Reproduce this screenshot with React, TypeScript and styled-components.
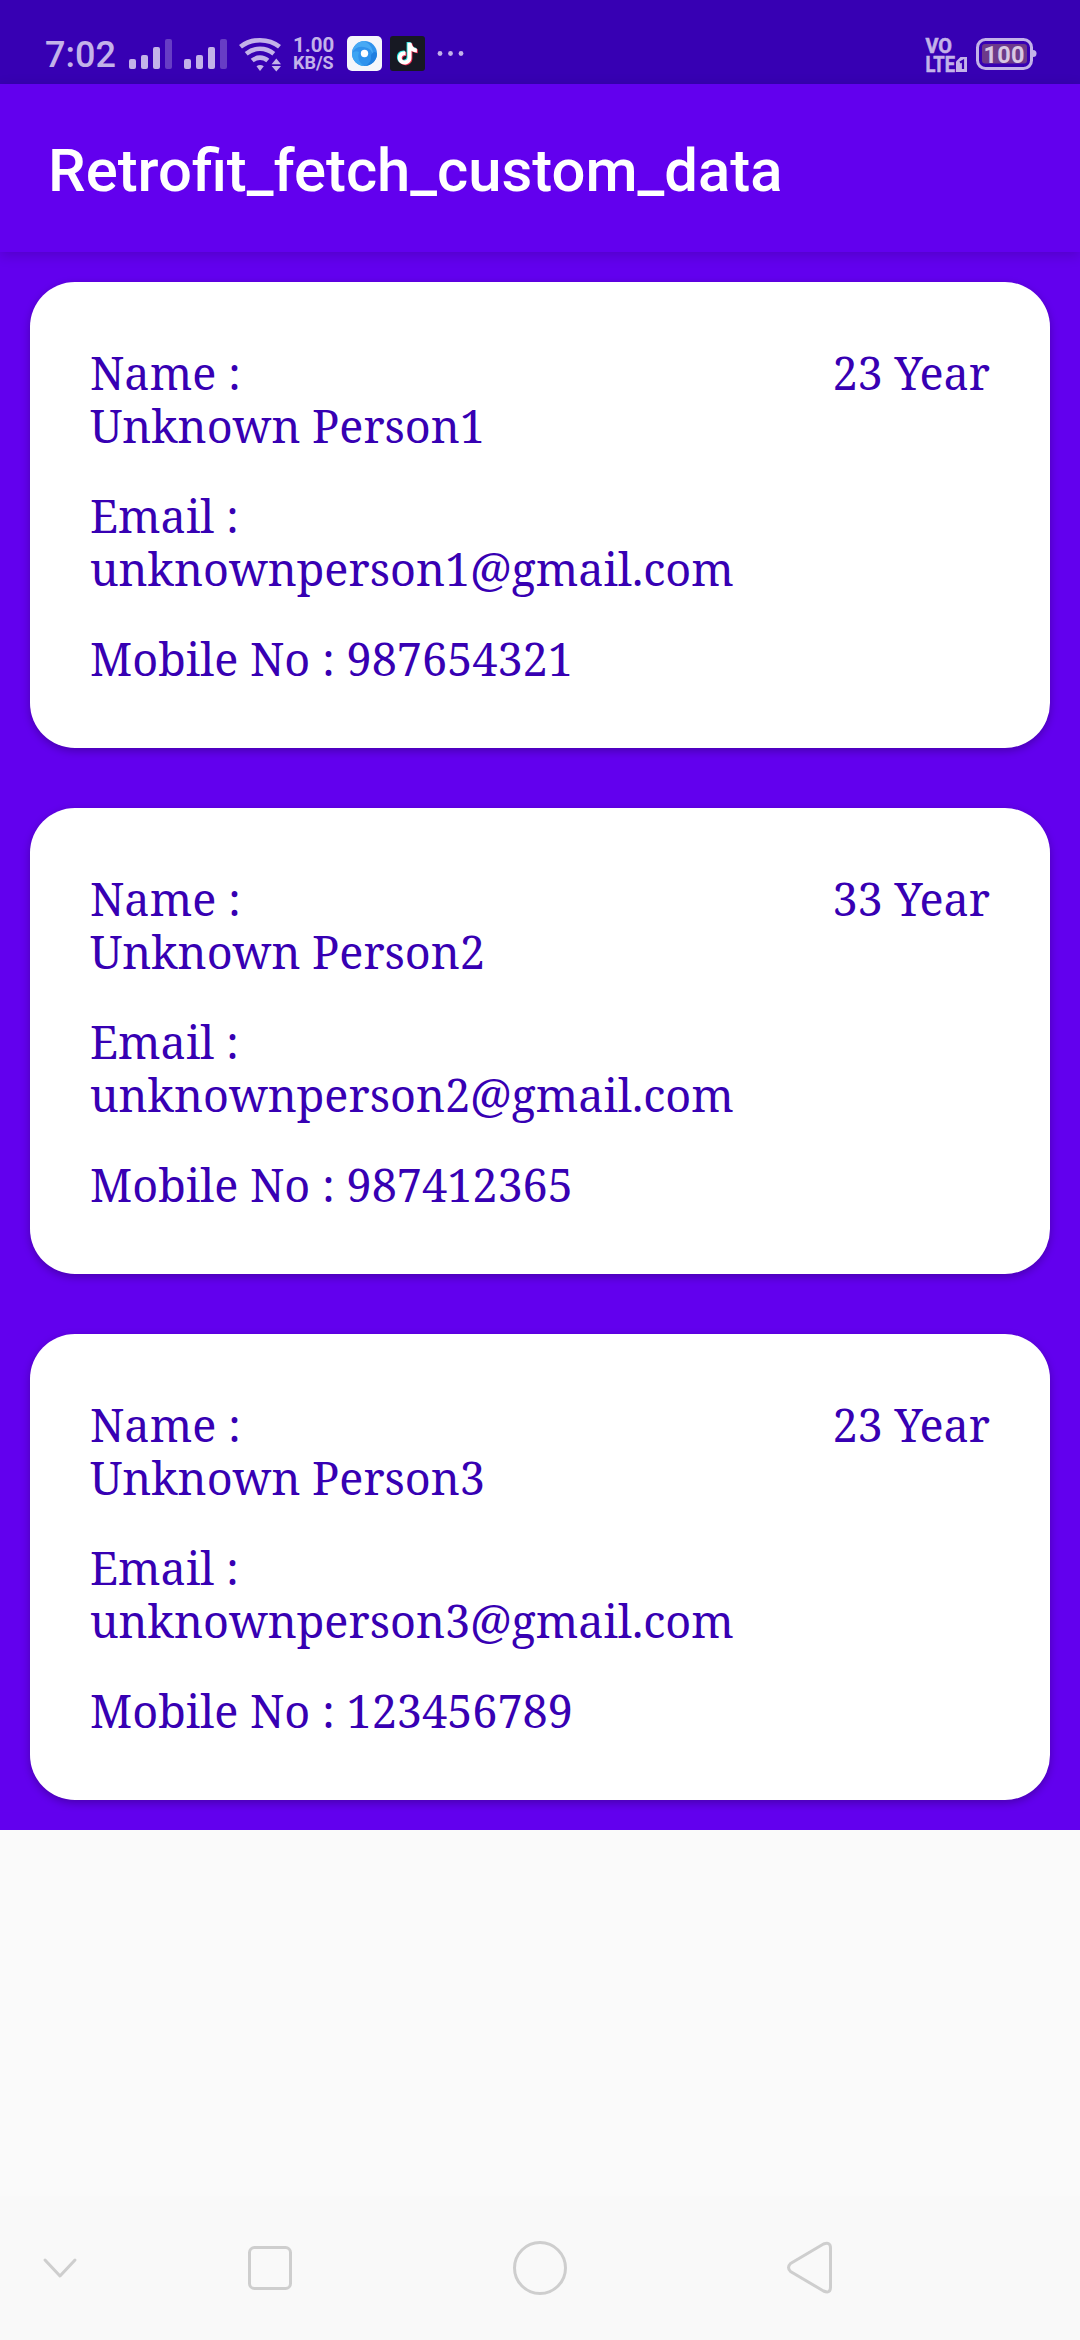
import React from 'react';
import styled, { createGlobalStyle } from 'styled-components';

const GlobalStyle = createGlobalStyle`
  body { margin: 0; background: #fafafa; }
  * { box-sizing: border-box; }
`;

const tint = '#c3b2e9';

const Screen = styled.div`
  width: 1080px;
  height: 2340px;
  display: flex;
  flex-direction: column;
  background: #fafafa;
  overflow: hidden;
  font-family: Roboto, sans-serif;
`;

const StatusBar = styled.header`
  height: 84px;
  flex: none;
  display: flex;
  align-items: flex-start;
  justify-content: space-between;
  padding: 36px 44px 0 45px;
  background: #3700b3;
  color: ${tint};
`;

const StatusGroup = styled.div`
  display: flex;
  align-items: flex-start;
`;

const Clock = styled.span`
  width: 84px;
  font-size: 36px;
  font-weight: 500;
  line-height: 39px;
`;

const Signal = styled.div`
  width: 55px;
  height: 33px;
  display: flex;
  align-items: flex-end;
  gap: 5px;
`;

const SignalBar = styled.span<{ $height: number; $dim?: boolean }>`
  width: 7px;
  height: ${(p) => p.$height}px;
  border-radius: 2px;
  background: ${tint};
  opacity: ${(p) => (p.$dim ? 0.34 : 1)};
`;

const Icon = styled.svg`
  display: block;
  flex: none;
  overflow: visible;
`;

const Speed = styled.div`
  width: 54px;
  padding-left: 12px;
  display: flex;
  flex-direction: column;
  font-weight: 700;
`;

const SpeedLine = styled.span<{ $size: number; $line: number }>`
  font-size: ${(p) => p.$size}px;
  line-height: ${(p) => p.$line}px;
`;

const AppIcons = styled.div`
  display: flex;
  gap: 8px;
  margin-left: 12px;
`;

const BatterySlot = styled.div`
  margin-left: 7px;
`;

const AppBar = styled.div`
  position: relative;
  z-index: 1;
  height: 168px;
  flex: none;
  display: flex;
  align-items: center;
  padding: 5px 48px 0;
  background: #6200ee;
  box-shadow: 0 3px 12px rgba(0, 0, 0, 0.17);
`;

const Title = styled.h1`
  margin: 0;
  color: #fff;
  font-size: 59.8px;
  font-weight: 500;
  line-height: 70px;
`;

const List = styled.main`
  display: flex;
  flex-direction: column;
  gap: 60px;
  padding: 30px;
  background: #6200ee;
`;

const Card = styled.article`
  height: 466px;
  display: flex;
  justify-content: space-between;
  padding: 64px 60px 0;
  border-radius: 45px;
  background: #fff;
  box-shadow: 0 3px 8px rgba(0, 0, 0, 0.27);
  color: #3700b3;
  font-family: 'Noto Serif', 'DejaVu Serif Condensed', 'DejaVu Serif', serif;
  font-size: 45px;
  line-height: 53px;
  white-space: nowrap;
`;

const Details = styled.div`
  display: flex;
  flex-direction: column;
  gap: 37px;
`;

const Field = styled.div`
  display: flex;
  flex-direction: column;
`;

const NavBar = styled.nav`
  height: 144px;
  flex: none;
  margin-top: auto;
  display: flex;
  align-items: center;
  background: #f9f9f9;
`;

const people = [
  { name: 'Unknown Person1', age: 23, email: 'unknownperson1@gmail.com', mobile: '987654321' },
  { name: 'Unknown Person2', age: 33, email: 'unknownperson2@gmail.com', mobile: '987412365' },
  { name: 'Unknown Person3', age: 23, email: 'unknownperson3@gmail.com', mobile: '123456789' },
];

const SignalIcon = () => (
  <Signal>
    <SignalBar $height={10} />
    <SignalBar $height={14} />
    <SignalBar $height={22} />
    <SignalBar $height={30} $dim />
  </Signal>
);

const WifiIcon = () => (
  <Icon width="42" height="36" viewBox="0 0 42 36">
    <g fill="none" stroke={tint} strokeWidth="4.6">
      <path d="M1.5 10.8Q9.5 4.2 21 4.2T40.5 10.8" />
      <path d="M7.2 17.8Q13.5 12.8 21 12.8T34.8 17.8" />
      <path d="M13.2 24.6Q16.7 21.6 21 21.6T28.8 24.6" />
    </g>
    <path d="M17.5 30.3Q21 27.8 24.8 30.3L21 35z" fill={tint} />
    <path d="M37.3 22.5L42 28.2H32.6zM32.6 30H42L37.3 35.5z" fill={tint} />
  </Icon>
);

const BrowserIcon = () => (
  <Icon width="35" height="35" viewBox="0 0 35 35">
    <rect width="35" height="35" rx="5" fill="#f5f6fb" />
    <circle cx="17.5" cy="17.5" r="12.5" fill="#2f92ed" />
    <path d="M17.5 5A12.5 12.5 0 0 0 5 17.5Q8 9.5 17 11Q25 12 26 20Q27 10 17.5 5z" fill="#47a9f4" />
    <path d="M5 17.5A12.5 12.5 0 0 0 17 30Q9 24 12 16Q8 14 5 17.5z" fill="#3da4f3" />
    <path d="M30 17.5A12.5 12.5 0 0 1 17 30Q25 28 24 19Q27 14 30 17.5z" fill="#1f7ee0" />
    <circle cx="17.5" cy="17.5" r="3.7" fill="#fff" />
  </Icon>
);

const note = 'M17.2 6.5H21.2C21.5 9.8 23.5 12 26.6 12.3V16.2C24.6 16.2 22.8 15.6 21.2 14.5V21.5C21.2 30.2 7.8 30.7 7.5 21.8C7.4 17.5 11 14.6 15.2 15.2V19.2C13.2 18.6 11.4 19.9 11.4 21.8C11.6 25.3 17.2 25.2 17.2 21.3z';

const TikTokIcon = () => (
  <Icon width="35" height="35" viewBox="0 0 35 35">
    <rect width="35" height="35" rx="3" fill="#171923" />
    <path d={note} transform="translate(-.6 -.6)" fill="#25e8e4" />
    <path d={note} transform="translate(1.2 1)" fill="#f22d55" />
    <path d={note} transform="translate(.3 .2)" fill="#fff" />
  </Icon>
);

const MoreIcon = () => (
  <Icon width="40" height="36" viewBox="0 0 40 36" fill={tint}>
    <circle cx="15" cy="17.5" r="2.4" />
    <circle cx="25.5" cy="17.5" r="2.4" />
    <circle cx="36" cy="17.5" r="2.4" />
  </Icon>
);

const VolteIcon = () => (
  <Icon width="44" height="37" viewBox="0 0 44 37" fill={tint} fontFamily="Roboto, sans-serif" fontWeight="700">
    <g stroke={tint} strokeWidth=".6">
      <text x="0.5" y="17" fontSize="21" textLength="26.5" lengthAdjust="spacingAndGlyphs">VO</text>
      <text x="0.5" y="35.6" fontSize="22" textLength="29.5" lengthAdjust="spacingAndGlyphs">LTE</text>
    </g>
    <path d="M35.5 21H42V36H31V25.5z" />
    <path d="M35 26.5L38 24.8V33" fill="none" stroke="#3700b3" strokeWidth="2.2" />
  </Icon>
);

const BatteryIcon = () => (
  <Icon width="60" height="36" viewBox="0 0 60 36" fontFamily="Roboto, sans-serif" fontWeight="700">
    <rect x="1.5" y="3.5" width="54" height="29" rx="8" fill="none" stroke={tint} strokeWidth="3" />
    <path d="M57 14A3.5 3.5 0 0 1 57 21z" fill={tint} />
    <rect x="6" y="8" width="45" height="19.5" rx="3" fill="#6d3a8a" />
    <text x="7.5" y="26.5" fontSize="23.5" fill="#d8c7e3" textLength="41">100</text>
  </Icon>
);

const NavIcons = () => (
  <Icon width="1080" height="144" viewBox="0 0 1080 144" fill="none" stroke="#cecece" strokeWidth="3" strokeLinecap="round" strokeLinejoin="round">
    <path d="M45 64L60 80L75 64" />
    <rect x="249.5" y="51.5" width="41" height="41" rx="5" />
    <circle cx="540" cy="72" r="25.5" />
    <path d="M790.5 67.5L823.5 48Q830.5 45.5 830.5 52V91Q830.5 98 823.5 95L790.5 75.5Q786.5 71.5 790.5 67.5z" />
  </Icon>
);

export default function App() {
  return (
    <Screen>
      <GlobalStyle />
      <StatusBar>
        <StatusGroup>
          <Clock>7:02</Clock>
          <SignalIcon />
          <SignalIcon />
          <WifiIcon />
          <Speed>
            <SpeedLine $size={20.5} $line={19}>1.00</SpeedLine>
            <SpeedLine $size={18} $line={15}>KB/S</SpeedLine>
          </Speed>
          <AppIcons>
            <BrowserIcon />
            <TikTokIcon />
          </AppIcons>
          <MoreIcon />
        </StatusGroup>
        <StatusGroup>
          <VolteIcon />
          <BatterySlot>
            <BatteryIcon />
          </BatterySlot>
        </StatusGroup>
      </StatusBar>
      <AppBar>
        <Title>Retrofit_fetch_custom_data</Title>
      </AppBar>
      <List>
        {people.map((person) => (
          <Card key={person.email}>
            <Details>
              <Field>
                <span>Name :</span>
                <span>{person.name}</span>
              </Field>
              <Field>
                <span>Email :</span>
                <span>{person.email}</span>
              </Field>
              <Field>Mobile No : {person.mobile}</Field>
            </Details>
            <span>{person.age} Year</span>
          </Card>
        ))}
      </List>
      <NavBar>
        <NavIcons />
      </NavBar>
    </Screen>
  );
}
